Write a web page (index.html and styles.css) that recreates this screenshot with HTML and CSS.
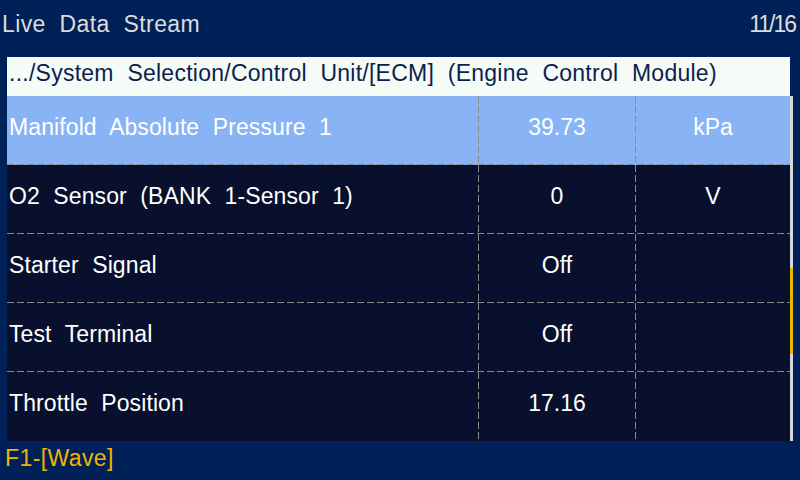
FILE: index.html
```html
<!DOCTYPE html>
<html lang="en">
<head>
<meta charset="utf-8">
<title>Live Data Stream</title>
<link rel="stylesheet" href="styles.css">
</head>
<body>
<div class="screen">
  <header class="topbar">
    <span class="title">Live Data Stream</span>
    <span class="page">11/16</span>
  </header>
  <main class="main">
    <div class="path">.../System Selection/Control Unit/[ECM] (Engine Control Module)</div>
    <div class="tablewrap">
      <div class="table">
        <div class="row selected">
          <div class="cell name">Manifold Absolute Pressure 1</div>
          <div class="cell value">39.73</div>
          <div class="cell unit">kPa</div>
        </div>
        <div class="row">
          <div class="cell name">O2 Sensor (BANK 1-Sensor 1)</div>
          <div class="cell value">0</div>
          <div class="cell unit">V</div>
        </div>
        <div class="row">
          <div class="cell name">Starter Signal</div>
          <div class="cell value">Off</div>
          <div class="cell unit"></div>
        </div>
        <div class="row">
          <div class="cell name">Test Terminal</div>
          <div class="cell value">Off</div>
          <div class="cell unit"></div>
        </div>
        <div class="row last">
          <div class="cell name">Throttle Position</div>
          <div class="cell value">17.16</div>
          <div class="cell unit"></div>
        </div>
      </div>
      <div class="scrollbar"><div class="thumb"></div></div>
    </div>
  </main>
  <footer class="footer">F1-[Wave]</footer>
</div>
</body>
</html>
```

FILE: styles.css
```css
html, body {
  margin: 0;
  padding: 0;
  background: #002157;
}

.screen {
  width: 800px;
  height: 480px;
  display: flex;
  flex-direction: column;
  background: #002157;
  font-family: "Liberation Sans", Arial, sans-serif;
  font-size: 23px;
  line-height: 23px;
  word-spacing: 7px;
  overflow: hidden;
}

.topbar {
  height: 57px;
  box-sizing: border-box;
  padding: 13px 5px 0 2px;
  display: flex;
  justify-content: space-between;
  align-items: flex-start;
  color: #dcdcdc;
}

.title {
  letter-spacing: 0.4px;
}

.page {
  word-spacing: 0;
  letter-spacing: -2px;
}

.main {
  margin-left: 7px;
  display: flex;
  flex-direction: column;
}

.path {
  width: 783px;
  height: 39px;
  box-sizing: border-box;
  padding: 0 0 7px 2px;
  display: flex;
  align-items: center;
  background: #f5fbf6;
  color: #0b1f4f;
  white-space: nowrap;
  letter-spacing: 0.25px;
}

.tablewrap {
  display: flex;
  height: 345px;
}

.table {
  width: 783px;
  display: flex;
  flex-direction: column;
}

.row {
  height: 69px;
  display: grid;
  grid-template-columns: 471px 157px 155px;
  background-color: #08102e;
  background-image: repeating-linear-gradient(to right, #8a8a8a 0 7px, transparent 7px 10px);
  background-size: 100% 1px;
  background-position: left bottom;
  background-repeat: no-repeat;
  color: #ffffff;
}

.row.selected {
  background-color: #88b4f6;
}

.row.last {
  background-image: none;
}

.cell {
  display: flex;
  align-items: center;
  box-sizing: border-box;
  padding-bottom: 7px;
  white-space: nowrap;
}

.name {
  padding-left: 2px;
  letter-spacing: 0.1px;
}

.value,
.unit {
  justify-content: center;
  word-spacing: 0;
  background-image: repeating-linear-gradient(to bottom, #8a8a8a 0 7px, transparent 7px 10px);
  background-size: 1px 100%;
  background-position: left top;
  background-repeat: no-repeat;
  padding-left: 1px;
}

.scrollbar {
  width: 3px;
  background: #d8d8d8;
  display: flex;
  flex-direction: column;
  padding-top: 172px;
  box-sizing: border-box;
}

.thumb {
  height: 86px;
  background: #f0b400;
}

.footer {
  flex: 1;
  box-sizing: border-box;
  padding: 6px 0 0 5px;
  color: #f0b400;
  word-spacing: 0;
  letter-spacing: 0.4px;
}
```
